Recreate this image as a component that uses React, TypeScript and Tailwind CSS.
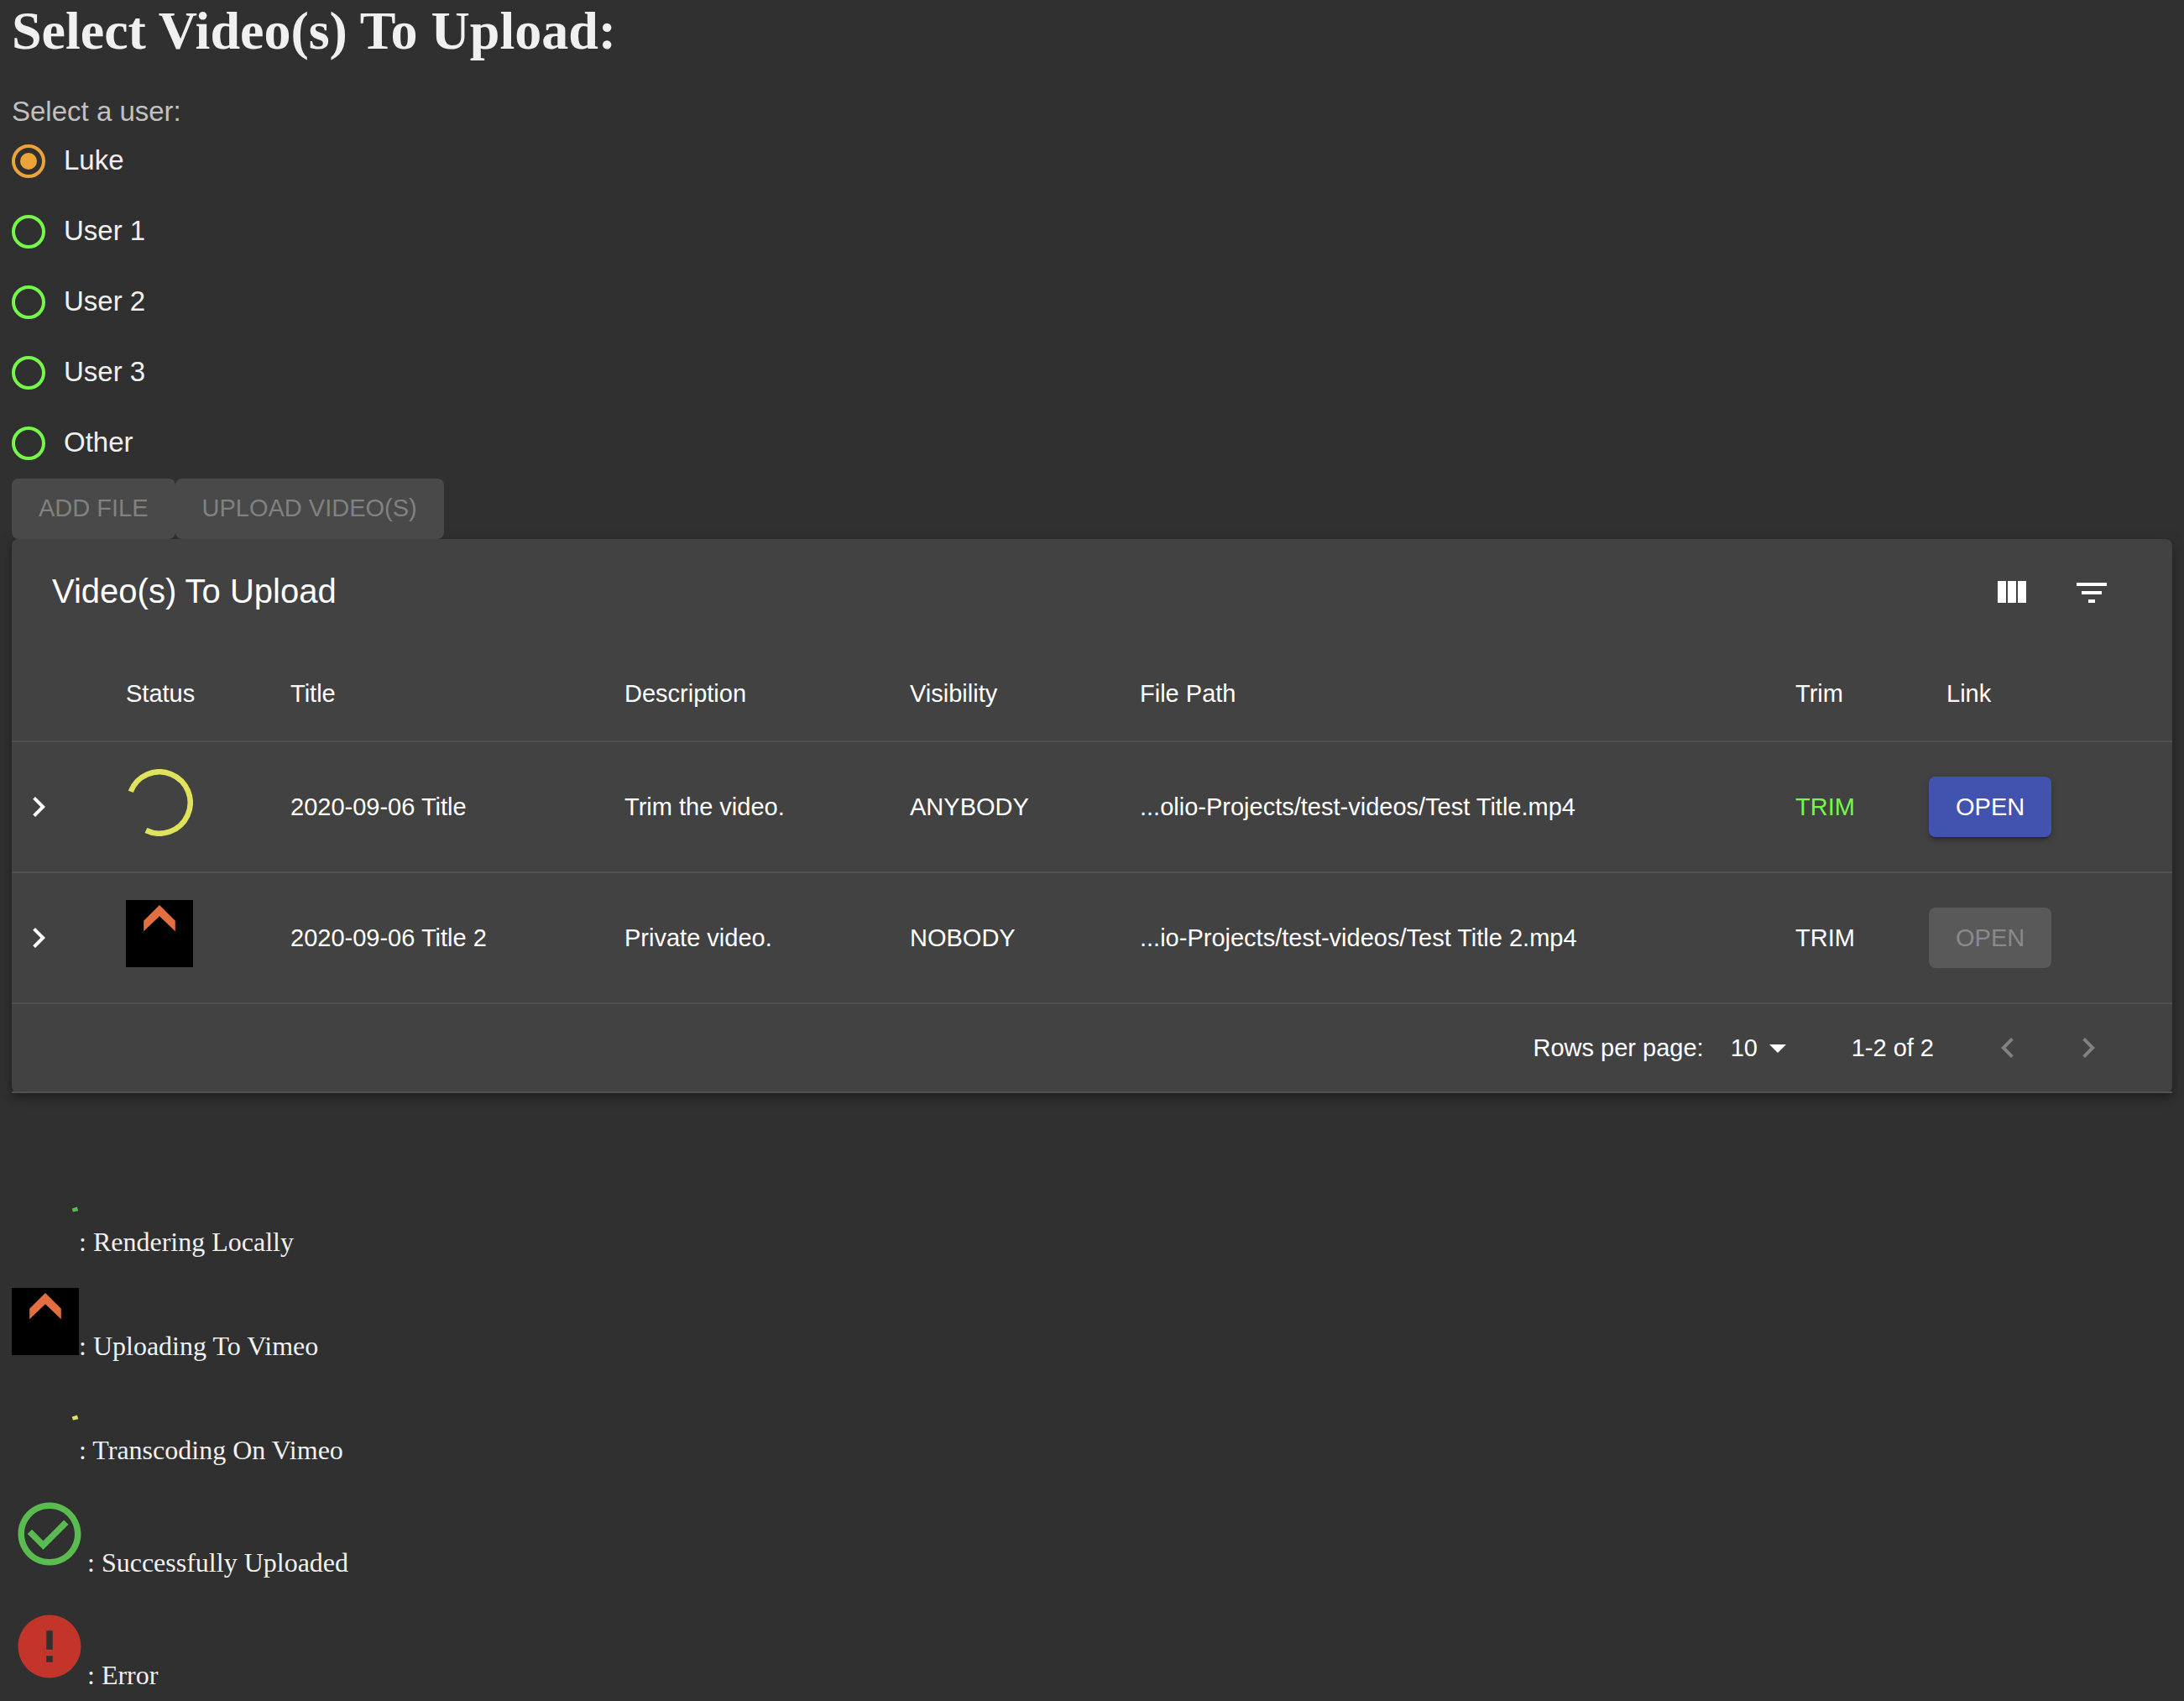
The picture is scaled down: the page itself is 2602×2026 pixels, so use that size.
import { useState } from "react";

const USERS = ["Luke", "User 1", "User 2", "User 3", "Other"];

type Video = {
  status: "transcoding" | "uploading";
  title: string;
  description: string;
  visibility: string;
  path: string;
  ready: boolean;
};

const VIDEOS: Video[] = [
  {
    status: "transcoding",
    title: "2020-09-06 Title",
    description: "Trim the video.",
    visibility: "ANYBODY",
    path: "...olio-Projects/test-videos/Test Title.mp4",
    ready: true,
  },
  {
    status: "uploading",
    title: "2020-09-06 Title 2",
    description: "Private video.",
    visibility: "NOBODY",
    path: "...io-Projects/test-videos/Test Title 2.mp4",
    ready: false,
  },
];

function Icon({ d, className }: { d: string; className: string }) {
  return (
    <svg viewBox="0 0 24 24" fill="currentColor" aria-hidden="true" className={className}>
      <path d={d} />
    </svg>
  );
}

const CHEVRON_RIGHT = "M10 6 8.59 7.41 13.17 12l-4.58 4.59L10 18l6-6z";
const CHEVRON_LEFT = "M15.41 7.41 14 6l-6 6 6 6 1.41-1.41L10.83 12z";
const VIEW_COLUMN = "M10 18h5V5h-5v13zm-6 0h5V5H4v13zM16 5v13h5V5h-5z";
const FILTER_LIST = "M10 18h4v-2h-4v2zM3 6v2h18V6H3zm3 7h12v-2H6v2z";
const ARROW_DROP_DOWN = "M7 10l5 5 5-5z";
const CHECK_OUTLINE =
  "M16.59 7.58 10 14.17l-3.59-3.58L5 12l5 5 8-8zM12 2C6.48 2 2 6.48 2 12s4.48 10 10 10 10-4.48 10-10S17.52 2 12 2zm0 18c-4.42 0-8-3.58-8-8s3.58-8 8-8 8 3.58 8 8-3.58 8-8 8z";
const ERROR_FILLED =
  "M12 2C6.48 2 2 6.48 2 12s4.48 10 10 10 10-4.48 10-10S17.52 2 12 2zm1 15h-2v-2h2v2zm0-4h-2V7h2v6z";

/* Part of a ring, drawn clockwise between two angles in degrees. */
function Arc({ from, to, className }: { from: number; to: number; className: string }) {
  const at = (deg: number) => {
    const a = (deg * Math.PI) / 180;
    return `${(40 + 36.7 * Math.cos(a)).toFixed(2)} ${(40 + 36.7 * Math.sin(a)).toFixed(2)}`;
  };
  return (
    <svg viewBox="0 0 80 80" className={className} aria-hidden="true">
      <path
        d={`M${at(from)}A36.7 36.7 0 ${to - from > 180 ? 1 : 0} 1 ${at(to)}`}
        fill="none"
        stroke="currentColor"
        strokeWidth="6.5"
      />
    </svg>
  );
}

function UploadingIcon() {
  return (
    <svg viewBox="0 0 80 80" className="size-20 shrink-0 bg-black" aria-hidden="true">
      <path d="M40 6 58.8 24.8V37.2L40 19.2 21.2 37.2V24.8z" fill="#e36f41" />
    </svg>
  );
}

function LegendItem({ icon, text }: { icon: React.ReactNode; text: string }) {
  return (
    <li className="flex items-baseline">
      {icon}
      <span>: {text}</span>
    </li>
  );
}

export default function App() {
  const [user, setUser] = useState("Luke");

  return (
    <div className="min-h-screen bg-[#303030] px-3.5 pb-3 font-['Liberation_Sans',Arial,sans-serif] text-[#f0f0f0]">
      <h1 className="font-['Liberation_Serif','Times_New_Roman',serif] text-[64px] leading-[74px] font-bold">
        Select Video(s) To Upload:
      </h1>

      <fieldset className="mt-[42px]">
        <legend className="text-[33px] leading-[34px] text-[#c1c1c1]">Select a user:</legend>
        {USERS.map((name) => (
          <label key={name} className="flex h-[84px] w-fit items-center gap-[22px] text-[33px] leading-9">
            <input
              type="radio"
              name="user"
              value={name}
              checked={user === name}
              onChange={() => setUser(name)}
              className="grid size-10 appearance-none place-content-center rounded-full border-4 border-[#76f84a] before:size-5 before:rounded-full checked:border-[#eca338] checked:before:bg-[#eca338]"
            />
            <span className="pb-0.5">{name}</span>
          </label>
        ))}
      </fieldset>

      <div className="flex">
        <button disabled className="h-[72px] rounded-lg bg-[#494949] px-8 text-[29px] text-[#818181]">
          ADD FILE
        </button>
        <button disabled className="h-[72px] rounded-lg bg-[#494949] px-8 text-[29px] text-[#818181]">
          UPLOAD VIDEO(S)
        </button>
      </div>

      <section className="rounded-lg bg-[#424242] text-[29px] leading-10 text-white shadow-[0_4px_8px_-2px_rgba(0,0,0,0.2),0_8px_10px_rgba(0,0,0,0.14),0_2px_20px_rgba(0,0,0,0.12)]">
        <header className="flex h-32 items-center justify-between pr-12 pl-12">
          <h2 className="pb-1 text-[40px] leading-[48px]">Video(s) To Upload</h2>
          <div className="flex">
            <button aria-label="View columns" className="p-6">
              <Icon d={VIEW_COLUMN} className="size-12" />
            </button>
            <button aria-label="Filter table" className="p-6">
              <Icon d={FILTER_LIST} className="size-12" />
            </button>
          </div>
        </header>

        <table className="w-full table-fixed border-collapse text-left">
          <colgroup>
            <col className="w-[104px]" />
            <col className="w-[196px]" />
            <col className="w-[398px]" />
            <col className="w-[340px]" />
            <col className="w-[274px]" />
            <col />
            <col className="w-[180px]" />
            <col className="w-[301px]" />
          </colgroup>
          <thead>
            <tr className="h-[113px] border-b-2 border-[#515151]">
              <td />
              {["Status", "Title", "Description", "Visibility", "File Path", "Trim", "Link"].map((h) => (
                <th key={h} scope="col" className="px-8 font-normal">
                  {h}
                </th>
              ))}
            </tr>
          </thead>
          <tbody>
            {VIDEOS.map((v) => (
              <tr key={v.title} className="h-[156px] border-b-2 border-[#515151]">
                <td className="pl-2">
                  <button aria-label={`Expand ${v.title}`} className="block">
                    <Icon d={CHEVRON_RIGHT} className="size-12" />
                  </button>
                </td>
                <td className="px-8 pt-8 align-top">
                  {v.status === "transcoding" ? (
                    <Arc from={201} to={476} className="size-20 text-[#dfe35b]" />
                  ) : (
                    <UploadingIcon />
                  )}
                </td>
                <td className="px-8">{v.title}</td>
                <td className="px-8">{v.description}</td>
                <td className="px-8">{v.visibility}</td>
                <td className="px-8 whitespace-nowrap">{v.path}</td>
                <td className="px-8">
                  <button className={v.ready ? "text-[#76f84a]" : "text-white"}>TRIM</button>
                </td>
                <td className="pl-[11px]">
                  <button
                    disabled={!v.ready}
                    className="block h-[72px] rounded-lg bg-[#4252af] px-8 shadow-[0_6px_2px_-4px_rgba(0,0,0,0.2),0_4px_4px_rgba(0,0,0,0.14),0_2px_10px_rgba(0,0,0,0.12)] disabled:bg-[#595959] disabled:text-[#8a8a8a] disabled:shadow-none"
                  >
                    OPEN
                  </button>
                </td>
              </tr>
            ))}
          </tbody>
        </table>

        <footer className="flex h-[106px] items-center justify-end border-b-2 border-[#515151] pr-[52px]">
          <label htmlFor="rows">Rows per page:</label>
          <div className="relative ml-8 w-20">
            <select id="rows" defaultValue="10" className="block w-full appearance-none bg-transparent pr-12">
              <option>10</option>
              <option>15</option>
              <option>100</option>
            </select>
            <Icon d={ARROW_DROP_DOWN} className="pointer-events-none absolute -top-1 right-0 size-12" />
          </div>
          <span className="ml-16">1-2 of 2</span>
          <div className="ml-10 flex text-[#818181]">
            <button aria-label="Previous page" disabled className="p-6">
              <Icon d={CHEVRON_LEFT} className="size-12" />
            </button>
            <button aria-label="Next page" disabled className="p-6">
              <Icon d={CHEVRON_RIGHT} className="size-12" />
            </button>
          </div>
        </footer>
      </section>

      <ul className="mt-[108px] flex flex-col gap-[37px] font-['Liberation_Serif','Times_New_Roman',serif] text-[32px] leading-9">
        <LegendItem
          icon={<Arc from={-18.3} to={-11.1} className="size-20 shrink-0 text-[#59bb50]" />}
          text="Rendering Locally"
        />
        <LegendItem icon={<UploadingIcon />} text="Uploading To Vimeo" />
        <LegendItem
          icon={<Arc from={-18.3} to={-11.1} className="size-20 shrink-0 text-[#dfe35b]" />}
          text="Transcoding On Vimeo"
        />
        <LegendItem
          icon={<Icon d={CHECK_OUTLINE} className="size-[90px] shrink-0 text-[#59bb50]" />}
          text="Successfully Uploaded"
        />
        <LegendItem
          icon={<Icon d={ERROR_FILLED} className="size-[90px] shrink-0 text-[#c3352b]" />}
          text="Error"
        />
      </ul>
    </div>
  );
}
